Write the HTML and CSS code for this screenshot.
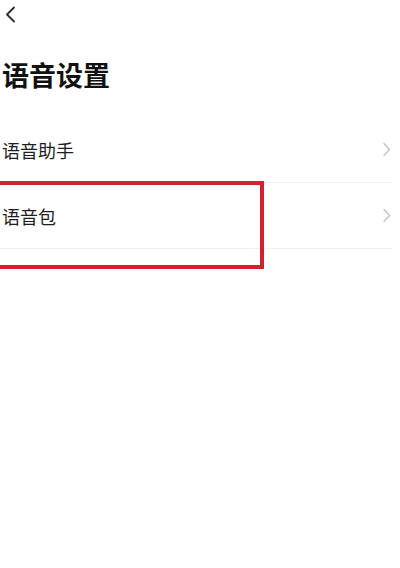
FILE: index.html
```html
<!DOCTYPE html>
<html lang="zh-CN">
<head>
<meta charset="utf-8">
<link rel="stylesheet" href="styles.css">
</head>
<body>
<div class="page">
  <div class="topbar">
    <svg class="back" width="12" height="17" viewBox="0 0 12 17"><path d="M10 1.5 L3 8.5 L10 15.5" fill="none" stroke="#2a2a2a" stroke-width="1.8" stroke-linecap="round" stroke-linejoin="round"/></svg>
  </div>
  <h1 class="title">语音设置</h1>
  <div class="list">
    <div class="row"><span class="label">语音助手</span><svg class="chev" width="9" height="15" viewBox="0 0 9 15"><path d="M2 1.5 L7.5 7.5 L2 13.5" fill="none" stroke="#c4c4c4" stroke-width="1.5" stroke-linecap="round" stroke-linejoin="round"/></svg></div>
    <div class="row"><span class="label">语音包</span><svg class="chev" width="9" height="15" viewBox="0 0 9 15"><path d="M2 1.5 L7.5 7.5 L2 13.5" fill="none" stroke="#c4c4c4" stroke-width="1.5" stroke-linecap="round" stroke-linejoin="round"/></svg></div>
  </div>
  <div class="highlight"></div>
</div>
</body>
</html>
```
FILE: styles.css
```css
html, body {
  margin: 0;
  padding: 0;
  background: #ffffff;
}
body {
  font-family: "Noto Sans CJK SC", "Noto Sans", sans-serif;
  color: #1a1a1a;
}
.page {
  position: relative;
  width: 400px;
  height: 568px;
  overflow: hidden;
}
.topbar {
  height: 30px;
  padding: 6px 0 0 4px;
  box-sizing: border-box;
}
.back {
  display: block;
}
.title {
  margin: 27px 0 0 2px;
  font-size: 27px;
  line-height: 36px;
  font-weight: 700;
  height: 36px;
  color: #111;
}
.list {
  margin-top: 24px;
  padding-right: 8px;
}
.row {
  height: 65px;
  border-bottom: 1px solid #eeeeee;
  display: flex;
  align-items: center;
  justify-content: space-between;
  padding-left: 2px;
  padding-right: 1px;
}
.label {
  font-size: 18px;
  line-height: 24px;
  color: #1e1e1e;
}
.chev {
  display: block;
}
.highlight {
  position: absolute;
  left: -12px;
  top: 181px;
  width: 268px;
  height: 80px;
  border: 4px solid #d41f2f;
}
```
